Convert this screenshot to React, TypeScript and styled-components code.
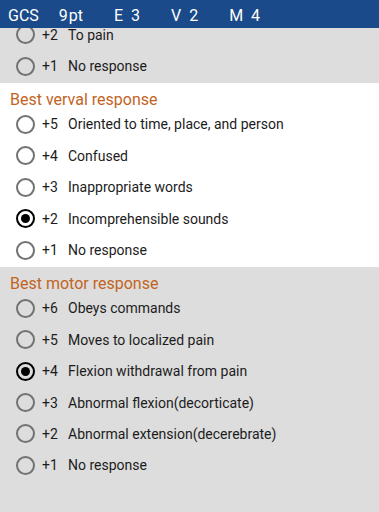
import React, { useLayoutEffect, useRef, useState } from "react";
import styled, { createGlobalStyle } from "styled-components";

const GlobalStyle = createGlobalStyle`
  html, body {
    margin: 0;
    padding: 0;
    background: #dddddd;
    font-family: Roboto, "Noto Sans", "Liberation Sans", sans-serif;
  }
  * {
    box-sizing: border-box;
  }
`;

export const Screen = styled.div`
  display: flex;
  flex-direction: column;
  width: 100%;
  height: 100vh;
  overflow: hidden;
  background: #dddddd;
`;

export const AppBar = styled.header`
  display: flex;
  align-items: flex-start;
  flex-shrink: 0;
  height: 28px;
  padding: 3px 0 0 8px;

  background: #1a4a89;
  color: #ffffff;
  font-size: 16px;
  line-height: 25px;
  white-space: pre;
`;

export const Brand = styled.span`
  margin-right: 20px;
`;

export const Stat = styled.span`
  margin-right: 31px;
`;

export const Unit = styled.span`
  margin-left: 1px;
`;

export const ScrollArea = styled.main`
  flex: 1;
  overflow-y: auto;
  scrollbar-width: none;

  &::-webkit-scrollbar {
    display: none;
  }
`;

export const List = styled.div`
  display: flex;
  flex-direction: column;
  padding-bottom: 40px;
`;

export const Section = styled.section<{ $light: boolean }>`
  display: flex;
  flex-direction: column;
  padding-bottom: 1px;
  background: ${(p) => (p.$light ? "#ffffff" : "#dddddd")};
`;

export const Title = styled.div`
  height: 26px;
  padding: 8px 10px 0;

  color: #c2641f;
  font-size: 16px;
  line-height: 18px;
`;

export const Option = styled.label`
  display: flex;
  align-items: center;
  flex-shrink: 0;
  height: 31.4px;
  padding-left: 16px;

  color: #1c1c1c;
  font-size: 14px;
  line-height: 16px;
  cursor: pointer;
`;

export const Radio = styled.input`
  appearance: none;
  display: grid;
  place-items: center;
  flex-shrink: 0;
  width: 19px;
  height: 19px;
  margin: 0 7px 0 0;

  border: 2px solid #727272;
  border-radius: 50%;
  background: transparent;
  cursor: pointer;

  &::after {
    content: "";
    width: 9px;
    height: 9px;
    border-radius: 50%;
    background: transparent;
  }

  &:checked {
    border: 2.3px solid #000000;
  }

  &:checked::after {
    background: #000000;
  }
`;

export const Score = styled.span`
  width: 26px;
  flex-shrink: 0;
`;

export const Text = styled.span`
  white-space: nowrap;
`;

type Item = { score: number; text: string };

type Group = {
  key: "E" | "V" | "M";
  title?: string;
  items: Item[];
};

// the eye group is scrolled up under the bar: only its last two rows show
const groups: Group[] = [
  {
    key: "E",
    items: [
      { score: 2, text: "To pain" },
      { score: 1, text: "No response" },
    ],
  },
  {
    key: "V",
    title: "Best verval response",
    items: [
      { score: 5, text: "Oriented to time, place, and person" },
      { score: 4, text: "Confused" },
      { score: 3, text: "Inappropriate words" },
      { score: 2, text: "Incomprehensible sounds" },
      { score: 1, text: "No response" },
    ],
  },
  {
    key: "M",
    title: "Best motor response",
    items: [
      { score: 6, text: "Obeys commands" },
      { score: 5, text: "Moves to localized pain" },
      { score: 4, text: "Flexion withdrawal from pain" },
      { score: 3, text: "Abnormal flexion(decorticate)" },
      { score: 2, text: "Abnormal extension(decerebrate)" },
      { score: 1, text: "No response" },
    ],
  },
];

const App: React.FC = () => {
  const [scores, setScores] = useState({ E: 3, V: 2, M: 4 });
  const scrollRef = useRef<HTMLElement>(null);

  useLayoutEffect(() => {
    if (scrollRef.current) scrollRef.current.scrollTop = 9;
  }, []);

  const total = scores.E + scores.V + scores.M;

  return (
    <Screen>
      <GlobalStyle />
      <AppBar>
        <Brand>GCS</Brand>
        <Stat>
          {total}
          <Unit>pt</Unit>
        </Stat>
        <Stat>E  {scores.E}</Stat>
        <Stat>V  {scores.V}</Stat>
        <Stat>M  {scores.M}</Stat>
      </AppBar>
      <ScrollArea ref={scrollRef}>
        <List>
          {groups.map((group, i) => (
            <Section key={group.key} $light={i % 2 === 1}>
              {group.title && <Title>{group.title}</Title>}
              {group.items.map((item) => (
                <Option key={item.score}>
                  <Radio
                    type="radio"
                    name={group.key}
                    checked={scores[group.key] === item.score}
                    onChange={() =>
                      setScores({ ...scores, [group.key]: item.score })
                    }
                  />
                  <Score>+{item.score}</Score>
                  <Text>{item.text}</Text>
                </Option>
              ))}
            </Section>
          ))}
        </List>
      </ScrollArea>
    </Screen>
  );
};

export default App;
